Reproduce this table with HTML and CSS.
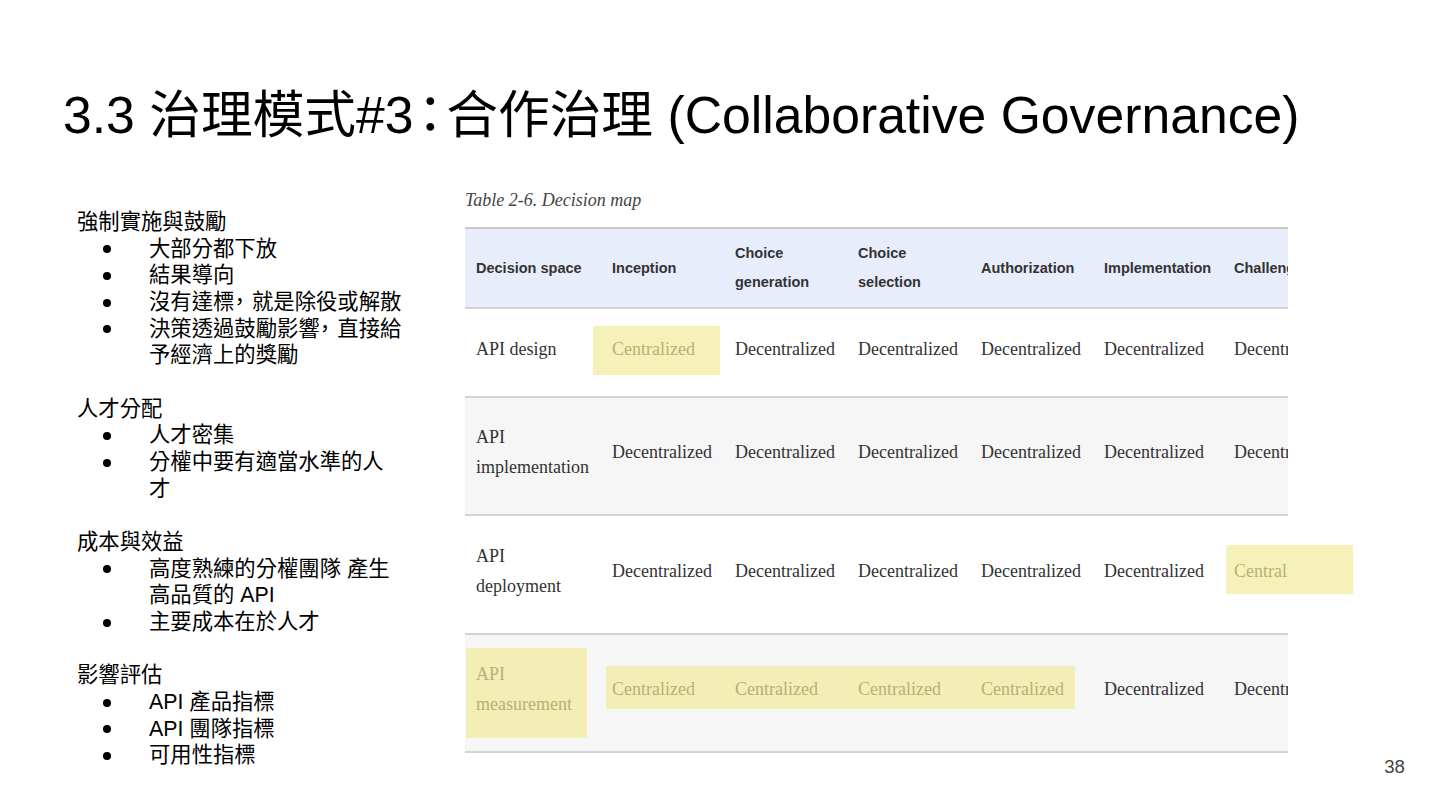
FILE: index.html
```html
<!DOCTYPE html>
<html lang="zh-Hant">
<head>
<meta charset="utf-8">
<title>3.3 治理模式#3：合作治理</title>
<link rel="stylesheet" href="styles.css">
</head>
<body>
<div class="slide">
  <h1 class="title">3.3 治理模式#3<span class="colon">：</span>合作治理 (Collaborative Governance)</h1>
  <div class="content">
    <div class="notes">
      <section class="group">
        <p class="group-title">強制實施與鼓勵</p>
        <ul>
          <li><span>大部分都下放</span></li>
          <li><span>結果導向</span></li>
          <li><span>沒有達標<span class="comma">，</span>就是除役或解散</span></li>
          <li><span>決策透過鼓勵影響<span class="comma">，</span>直接給予經濟上的獎勵</span></li>
        </ul>
      </section>
      <section class="group">
        <p class="group-title">人才分配</p>
        <ul>
          <li><span>人才密集</span></li>
          <li><span>分權中要有適當水準的人才</span></li>
        </ul>
      </section>
      <section class="group">
        <p class="group-title">成本與效益</p>
        <ul>
          <li><span>高度熟練的分權團隊 產生高品質的 API</span></li>
          <li><span>主要成本在於人才</span></li>
        </ul>
      </section>
      <section class="group">
        <p class="group-title">影響評估</p>
        <ul>
          <li><span>API 產品指標</span></li>
          <li><span>API 團隊指標</span></li>
          <li><span>可用性指標</span></li>
        </ul>
      </section>
    </div>
    <div class="figure">
      <p class="caption">Table 2-6. Decision map</p>
      <div class="table-area">
        <div class="table-clip">
          <div class="trow thead">
            <div class="cell">Decision space</div>
            <div class="cell">Inception</div>
            <div class="cell">Choice generation</div>
            <div class="cell">Choice selection</div>
            <div class="cell">Authorization</div>
            <div class="cell">Implementation</div>
            <div class="cell">Challenge</div>
          </div>
          <div class="trow tbody r1">
            <div class="cell">API design</div>
            <div class="cell">Centralized</div>
            <div class="cell">Decentralized</div>
            <div class="cell">Decentralized</div>
            <div class="cell">Decentralized</div>
            <div class="cell">Decentralized</div>
            <div class="cell">Decentralized</div>
          </div>
          <div class="trow tbody r2 alt">
            <div class="cell">API implementation</div>
            <div class="cell">Decentralized</div>
            <div class="cell">Decentralized</div>
            <div class="cell">Decentralized</div>
            <div class="cell">Decentralized</div>
            <div class="cell">Decentralized</div>
            <div class="cell">Decentralized</div>
          </div>
          <div class="trow tbody r3">
            <div class="cell">API deployment</div>
            <div class="cell">Decentralized</div>
            <div class="cell">Decentralized</div>
            <div class="cell">Decentralized</div>
            <div class="cell">Decentralized</div>
            <div class="cell">Decentralized</div>
            <div class="cell">Centralized</div>
          </div>
          <div class="trow tbody r4 alt">
            <div class="cell">API measurement</div>
            <div class="cell">Centralized</div>
            <div class="cell">Centralized</div>
            <div class="cell">Centralized</div>
            <div class="cell">Centralized</div>
            <div class="cell">Decentralized</div>
            <div class="cell">Decentralized</div>
          </div>
        </div>
        <div class="hl hl-inception"></div>
        <div class="hl hl-challenge"></div>
        <div class="hl hl-measure"></div>
        <div class="hl hl-central"></div>
      </div>
      <div class="page-num">38</div>
    </div>
  </div>
</div>
</body>
</html>
```
FILE: styles.css
```css
html, body {
  margin: 0;
  padding: 0;
  background: #fff;
}

.slide {
  width: 1440px;
  height: 810px;
  overflow: hidden;
  background: #fff;
  color: #000;
  font-family: "Liberation Sans", "Noto Sans CJK TC", sans-serif;
}

.title {
  margin: 0;
  height: 150px;
  box-sizing: border-box;
  padding: 84px 0 0 63px;
  font-size: 51.7px;
  font-weight: normal;
  line-height: 62px;
  white-space: nowrap;
}

.colon {
  font-feature-settings: "halt" 1;
  margin: 0 3px 0 4px;
}

.content {
  display: grid;
  grid-template-columns: 465px 1fr;
}

.notes {
  padding: 59px 0 0 77px;
  font-size: 21.33px;
  line-height: 26.67px;
}

.group + .group {
  margin-top: 26.67px;
}

.group-title {
  margin: 0;
}

.notes ul {
  margin: 0;
  padding: 0;
  list-style: none;
  width: 326px;
}

.notes li {
  display: flex;
  padding-left: 26px;
}

.notes li::before {
  content: "";
  flex: none;
  width: 8px;
  height: 8px;
  border-radius: 50%;
  background: #000;
  margin: 9.5px 38px 0 0;
}

.comma {
  font-feature-settings: "halt" 1;
  margin-right: 7px;
}

.figure {
  display: flex;
  flex-direction: column;
  padding: 38px 35px 0 0;
}

.caption {
  margin: 0 0 15px;
  font-family: "Liberation Serif", serif;
  font-style: italic;
  font-size: 18px;
  line-height: 24px;
  color: #444;
}

.table-area {
  position: relative;
}

.table-clip {
  width: 823px;
  overflow: hidden;
}

.trow {
  display: grid;
  grid-template-columns: 136px 123px 123px 123px 123px 130px 130px;
  width: 888px;
  box-sizing: border-box;
  align-items: center;
  border-bottom: 2px solid #d3d3d3;
  color: #333;
}

.cell {
  padding: 0 6px 0 11px;
}

.cell:first-child {
  padding-right: 12px;
}

.thead {
  height: 82px;
  border-top: 2px solid #c9c9c9;
  background: #e8edfc;
  font-family: "Liberation Sans", sans-serif;
  font-weight: bold;
  font-size: 14.5px;
  line-height: 29px;
}

.tbody {
  font-family: "Liberation Serif", serif;
  font-size: 18px;
  line-height: 30px;
  padding-bottom: 8px;
  background: #fff;
}

.tbody.alt {
  background: #f6f6f6;
}

.r1 { height: 89px; }
.r2 { height: 118px; }
.r3 { height: 119px; }
.r4 { height: 118px; }

.hl {
  position: absolute;
  background: rgba(240, 234, 150, 0.68);
}

.hl-inception {
  left: 128px;
  top: 99px;
  width: 127px;
  height: 49px;
}

.hl-challenge {
  left: 761px;
  top: 318px;
  width: 127px;
  height: 49px;
}

.hl-measure {
  left: 1px;
  top: 421px;
  width: 121px;
  height: 90px;
}

.hl-central {
  left: 141px;
  top: 439px;
  width: 469px;
  height: 43px;
}

.page-num {
  margin-top: 3px;
  text-align: right;
  font-size: 18.67px;
  line-height: 21px;
  color: #444;
}
```
